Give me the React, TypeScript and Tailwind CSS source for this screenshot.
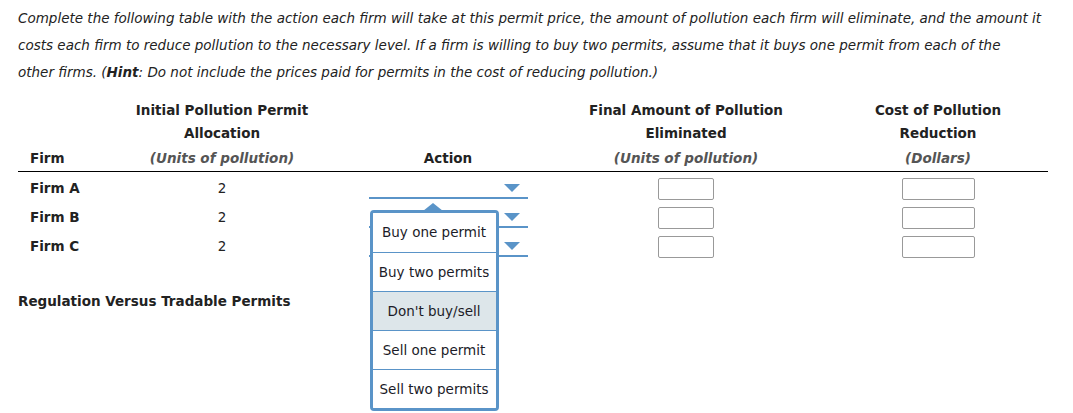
import React from 'react';

const firms = ['Firm A', 'Firm B', 'Firm C'];
const options = ['Buy one permit', 'Buy two permits', "Don't buy/sell", 'Sell one permit', 'Sell two permits'];

const Caret = () => (
    <svg width="16" height="8" viewBox="0 0 16 8" className="absolute right-[8px] top-[10px]">
        <polygon points="0,0 16,0 8,8" fill="#5a94c8" />
    </svg>
);

const SelectBox = ({ open }: { open?: boolean }) => (
    <div className="relative w-[159px] h-[25px] border-b-2 border-[#5a94c8]">
        <Caret />
        {open && (
            <div className="absolute left-[1px] top-[36px] z-10 w-[129px]">
                <svg width="20" height="8" viewBox="0 0 20 8" className="absolute left-[53px] -top-[7px]">
                    <polygon points="0,8 10,0 20,8" fill="#5a94c8" />
                </svg>
                <div className="border-[3px] border-[#5a94c8] rounded-[4px] bg-white overflow-hidden">
                    {options.map((o, i) => (
                        <div
                            key={o}
                            className={
                                'h-[39px] flex items-center justify-center text-[13.5px] text-[#1c1c28] ' +
                                (i > 0 ? 'border-t border-[#5a94c8] ' : '') +
                                (i === 2 ? 'bg-[#dde6ea]' : 'bg-white')
                            }
                        >
                            {o}
                        </div>
                    ))}
                </div>
            </div>
        )}
    </div>
);

export default function App() {
    return (
        <div className="bg-white w-[1073px] h-[413px] text-[#222] font-['DejaVu_Sans','Verdana',sans-serif]">
            <p className="pl-[18px] pt-[5px] italic text-[13.5px] leading-[27px] text-[#222] whitespace-nowrap">
                Complete the following table with the action each firm will take at this permit price, the amount of pollution each firm will eliminate, and the amount it
                <br />
                costs each firm to reduce pollution to the necessary level. If a firm is willing to buy two permits, assume that it buys one permit from each of the
                <br />
                other firms. (<b>Hint</b>: Do not include the prices paid for permits in the cost of reducing pollution.)
            </p>

            <div className="ml-[18px] mt-[12px] w-[1030px]">
                <div className="grid grid-cols-[109px_190px_262px_214px_255px] border-b border-black text-[13.5px] font-bold leading-[23px] pb-[1px] pt-[1px]">
                    <div className="flex items-end pl-[12px]">Firm</div>
                    <div className="flex flex-col items-center justify-end">
                        <span>Initial Pollution Permit</span>
                        <span>Allocation</span>
                        <span className="italic text-[#555] mt-[2px]">(Units of pollution)</span>
                    </div>
                    <div className="flex items-end justify-center">Action</div>
                    <div className="flex flex-col items-center justify-end">
                        <span>Final Amount of Pollution</span>
                        <span>Eliminated</span>
                        <span className="italic text-[#555] mt-[2px]">(Units of pollution)</span>
                    </div>
                    <div className="flex flex-col items-center justify-end pl-[35px]">
                        <span>Cost of Pollution</span>
                        <span>Reduction</span>
                        <span className="italic text-[#555] mt-[2px]">(Dollars)</span>
                    </div>
                </div>

                <div className="pt-[2px]">
                    {firms.map((f, i) => (
                        <div key={f} className="grid grid-cols-[109px_190px_262px_214px_255px] h-[29px] items-center text-[13.5px]">
                            <div className="pl-[12px] font-bold">{f}</div>
                            <div className="text-center">2</div>
                            <div className="flex justify-center self-start">
                                <SelectBox open={i === 0} />
                            </div>
                            <div className="flex justify-center">
                                <div className="w-[56px] h-[22px] border border-[#999] rounded-[2px]" />
                            </div>
                            <div className="flex justify-center pl-[35px]">
                                <div className="w-[73px] h-[22px] border border-[#999] rounded-[2px]" />
                            </div>
                        </div>
                    ))}
                </div>

                <div className="mt-[30px] text-[13.5px] font-bold">Regulation Versus Tradable Permits</div>
            </div>
        </div>
    );
}
